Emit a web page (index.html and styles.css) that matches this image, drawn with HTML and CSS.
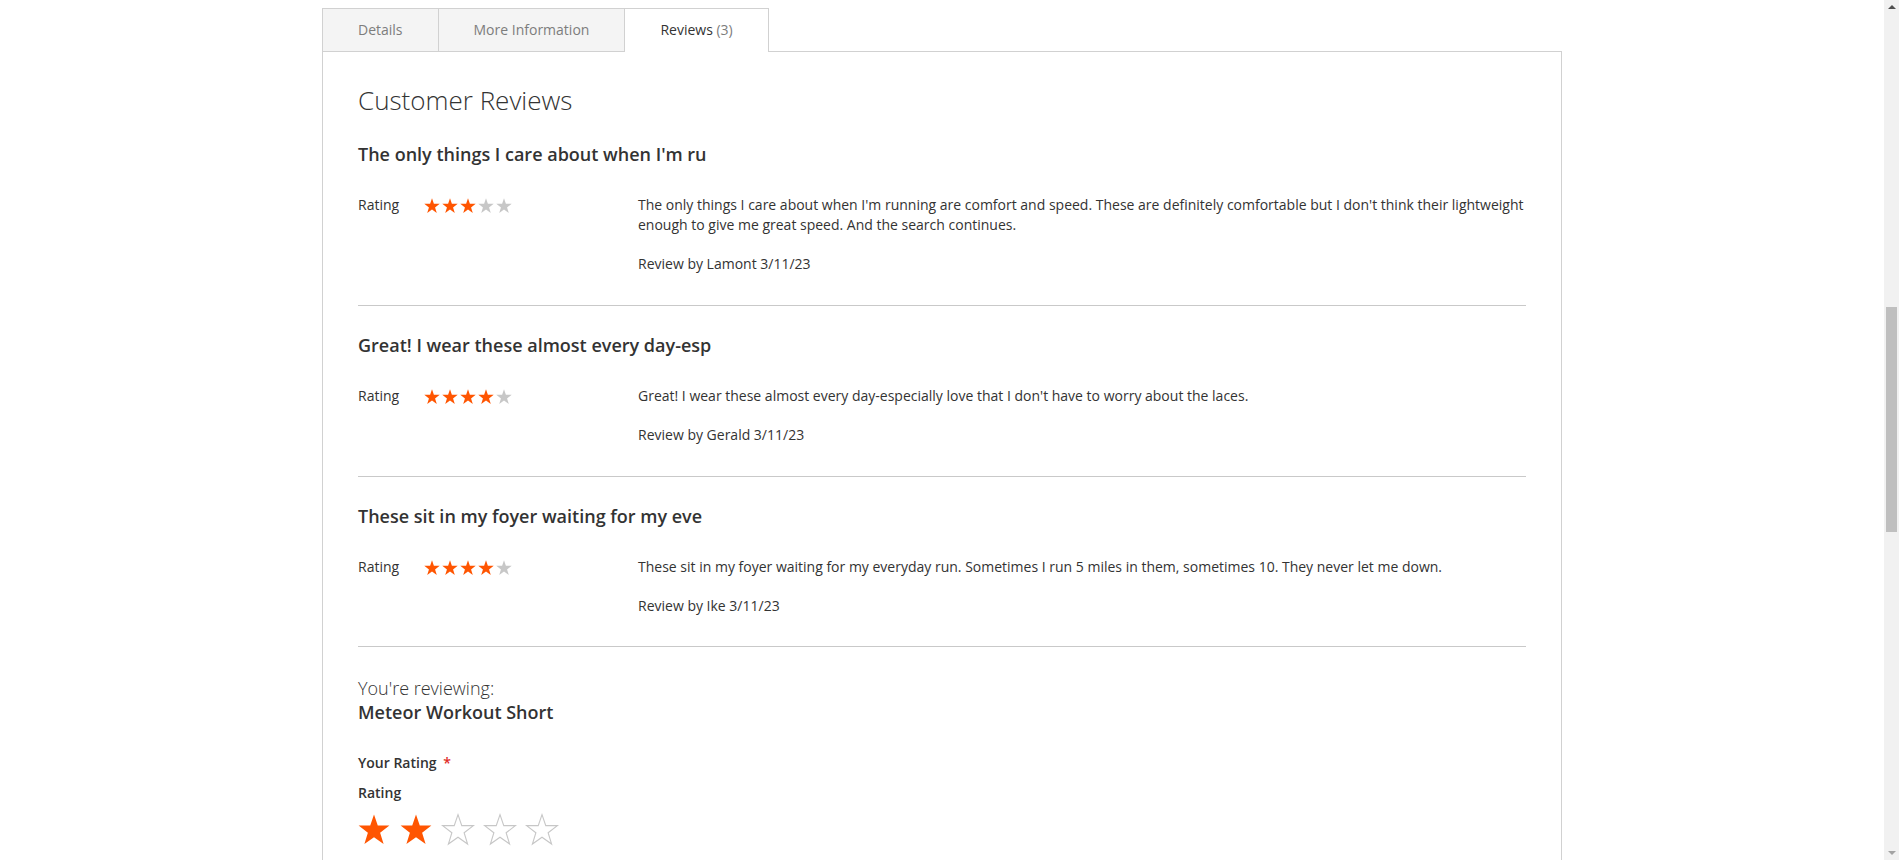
FILE: index.html
```html
<!DOCTYPE html>
<html lang="en">
<head>
<meta charset="utf-8">
<title>Meteor Workout Short - Reviews</title>
<link rel="stylesheet" href="styles.css">
</head>
<body>
<svg class="defs" width="0" height="0" aria-hidden="true">
  <defs>
    <polygon id="star" points="16,0.6 19.77,11.61 31.4,11.61 22.11,18.78 25.6,30 16,23.22 6.4,30 9.89,18.78 0.6,11.61 12.23,11.61"/>
  </defs>
</svg>
<div class="viewport">
  <div class="page">
    <div class="tabs">
      <div class="tab">Details</div>
      <div class="tab">More Information</div>
      <div class="tab active">Reviews <span class="counter">(3)</span></div>
    </div>
    <div class="panel">
      <h2 class="list-title">Customer Reviews</h2>
      <ol class="reviews">
        <li class="review">
          <div class="review-title">The only things I care about when I'm ru</div>
          <div class="review-body">
            <div class="review-rating">
              <span class="rating-label">Rating</span>
              <span class="stars">
                <svg class="s on" viewBox="0 0 32 31"><use href="#star"/></svg>
                <svg class="s on" viewBox="0 0 32 31"><use href="#star"/></svg>
                <svg class="s on" viewBox="0 0 32 31"><use href="#star"/></svg>
                <svg class="s off" viewBox="0 0 32 31"><use href="#star"/></svg>
                <svg class="s off" viewBox="0 0 32 31"><use href="#star"/></svg>
              </span>
            </div>
            <div class="review-main">
              <p class="review-content">The only things I care about when I'm running are comfort and speed. These are definitely comfortable but I don't think their lightweight enough to give me great speed. And the search continues.</p>
              <p class="review-details">Review by Lamont 3/11/23</p>
            </div>
          </div>
        </li>
        <li class="review">
          <div class="review-title">Great! I wear these almost every day-esp</div>
          <div class="review-body">
            <div class="review-rating">
              <span class="rating-label">Rating</span>
              <span class="stars">
                <svg class="s on" viewBox="0 0 32 31"><use href="#star"/></svg>
                <svg class="s on" viewBox="0 0 32 31"><use href="#star"/></svg>
                <svg class="s on" viewBox="0 0 32 31"><use href="#star"/></svg>
                <svg class="s on" viewBox="0 0 32 31"><use href="#star"/></svg>
                <svg class="s off" viewBox="0 0 32 31"><use href="#star"/></svg>
              </span>
            </div>
            <div class="review-main">
              <p class="review-content">Great! I wear these almost every day-especially love that I don't have to worry about the laces.</p>
              <p class="review-details">Review by Gerald 3/11/23</p>
            </div>
          </div>
        </li>
        <li class="review">
          <div class="review-title">These sit in my foyer waiting for my eve</div>
          <div class="review-body">
            <div class="review-rating">
              <span class="rating-label">Rating</span>
              <span class="stars">
                <svg class="s on" viewBox="0 0 32 31"><use href="#star"/></svg>
                <svg class="s on" viewBox="0 0 32 31"><use href="#star"/></svg>
                <svg class="s on" viewBox="0 0 32 31"><use href="#star"/></svg>
                <svg class="s on" viewBox="0 0 32 31"><use href="#star"/></svg>
                <svg class="s off" viewBox="0 0 32 31"><use href="#star"/></svg>
              </span>
            </div>
            <div class="review-main">
              <p class="review-content">These sit in my foyer waiting for my everyday run. Sometimes I run 5 miles in them, sometimes 10. They never let me down.</p>
              <p class="review-details">Review by Ike 3/11/23</p>
            </div>
          </div>
        </li>
      </ol>
      <form class="review-form">
        <div class="legend">
          <span>You're reviewing:</span>
          <strong>Meteor Workout Short</strong>
        </div>
        <div class="field-label">Your Rating <span class="req">*</span></div>
        <div class="vote-label">Rating</div>
        <div class="vote-stars">
          <svg class="b on" viewBox="0 0 32 31"><use href="#star"/></svg>
          <svg class="b on" viewBox="0 0 32 31"><use href="#star"/></svg>
          <svg class="b off" viewBox="0 0 32 31"><use href="#star"/></svg>
          <svg class="b off" viewBox="0 0 32 31"><use href="#star"/></svg>
          <svg class="b off" viewBox="0 0 32 31"><use href="#star"/></svg>
        </div>
      </form>
    </div>
  </div>
</div>
<div class="scrollbar">
  <div class="sb-btn"><span class="arrow up"></span></div>
  <div class="sb-track"><div class="sb-thumb"></div></div>
  <div class="sb-btn"><span class="arrow down"></span></div>
</div>
</body>
</html>
```
FILE: styles.css
```css
* { box-sizing: border-box; }

html, body {
  height: 100%;
  margin: 0;
  overflow: hidden;
}

body {
  display: flex;
  font-family: "Open Sans", "Liberation Sans", sans-serif;
  font-size: 14px;
  line-height: 20px;
  color: #333;
  background: #fff;
}

.defs { position: absolute; width: 0; height: 0; }

.viewport {
  flex: 1;
  min-width: 0;
  height: 100%;
  overflow: hidden;
}

.page {
  max-width: 1280px;
  margin: 0 auto;
  padding: 8px 20px 0;
}

/* tabs */
.tabs {
  display: flex;
  align-items: flex-start;
}

.tab {
  height: 43px;
  padding: 1px 35px 0;
  line-height: 40px;
  border: 1px solid #d1d1d1;
  border-bottom: 0;
  background: #f4f4f4;
  color: #7d7d7d;
  margin-right: -1px;
  white-space: nowrap;
}

.tab.active {
  position: relative;
  z-index: 1;
  height: 44px;
  margin-bottom: -1px;
  background: #fff;
  color: #333;
}

.counter { color: #7d7d7d; }

/* panel */
.panel {
  border: 1px solid #d1d1d1;
  padding: 35px 35px 120px;
}

.list-title {
  margin: 0 0 2px;
  font-size: 26px;
  font-weight: 300;
  line-height: 26px;
}

.reviews {
  list-style: none;
  margin: 0;
  padding: 0;
}

.review {
  padding: 29px 0 31px;
  border-bottom: 1px solid #c9c9c9;
}

.review:last-child { padding-bottom: 30px; }

.review-title {
  font-size: 18px;
  font-weight: 600;
  line-height: 20px;
  margin: 0 0 31px;
}

.review-body {
  display: flex;
  align-items: flex-start;
}

.review-rating {
  flex: none;
  width: 280px;
  height: 20px;
  display: flex;
  align-items: center;
}

.rating-label {
  flex: none;
  width: 66px;
}

.stars {
  display: flex;
  gap: 2px;
  margin-top: 2px;
}

.s {
  width: 16px;
  height: 15.5px;
  display: block;
}

.on { fill: #ff5501; }
.s.off { fill: #c7c7c7; }

.review-main {
  flex: 1;
  min-width: 0;
}

.review-content { margin: 0 0 19px; }
.review-details { margin: 0; }

/* form */
.review-form { margin-top: 29px; }

.legend {
  margin-bottom: 29px;
  font-size: 18px;
  line-height: 24px;
}

.legend span {
  display: block;
  font-weight: 300;
}

.legend strong {
  display: block;
  font-weight: 600;
}

.field-label { font-weight: 600; }
.req { color: #e02b27; margin-left: 3px; }

.vote-label {
  margin-top: 10px;
  font-weight: 600;
}

.vote-stars {
  display: flex;
  gap: 10px;
  margin-top: 11px;
}

.b {
  width: 32px;
  height: 31px;
  display: block;
  overflow: visible;
}

.b.off {
  fill: #fff;
  stroke: #c7c7c7;
  stroke-width: 1.1;
}

/* fake browser scrollbar */
.scrollbar {
  flex: none;
  width: 15px;
  height: 100%;
  background: #f1f1f1;
  display: flex;
  flex-direction: column;
}

.sb-btn {
  flex: none;
  height: 15px;
  display: flex;
  align-items: center;
  justify-content: center;
}

.arrow {
  width: 0;
  height: 0;
  border-left: 4px solid transparent;
  border-right: 4px solid transparent;
}

.arrow.up { border-bottom: 4px solid #505050; margin-top: -1px; }
.arrow.down { border-top: 4px solid #a3a3a3; }

.sb-track {
  flex: 1;
  padding: 292px 2px 0;
}

.sb-thumb {
  height: 225px;
  background: #bfbfbf;
}
```
